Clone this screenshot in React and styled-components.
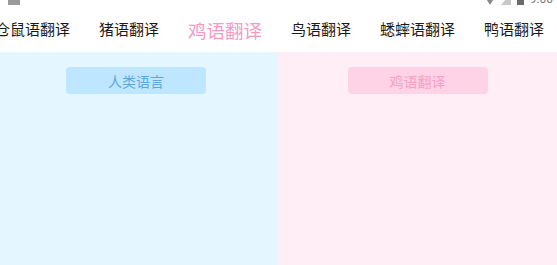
import styled, { createGlobalStyle } from "styled-components";

const GlobalStyle = createGlobalStyle`
  html, body {
    margin: 0;
    padding: 0;
    background: #ffffff;
    font-family: "Noto Sans CJK SC", "Noto Sans", sans-serif;
  }
  #root {
    width: 557px;
    height: 265px;
    overflow: hidden;
  }
`;

const Page = styled.div`
  width: 557px;
  height: 265px;
  display: flex;
  flex-direction: column;
  overflow: hidden;
`;

const StatusBar = styled.div`
  height: 5px;
  padding: 0 4px 0 8px;
  display: flex;
  align-items: flex-end;
  justify-content: space-between;
  overflow: hidden;
  color: #8a8a8a;
`;

const StatusRight = styled.div`
  display: flex;
  align-items: flex-end;
  gap: 6px;
`;

const Clock = styled.span`
  font-family: "Roboto", sans-serif;
  font-size: 12px;
  line-height: 12px;
  color: #7a7a7a;
`;

const TabBar = styled.div`
  height: 47px;
  display: flex;
  align-items: center;
  gap: 29px;
  margin-left: -5px;
  white-space: nowrap;
`;

const Tab = styled.div`
  font-size: ${(p) => (p.$active ? "18.5px" : "15px")};
  color: ${(p) => (p.$active ? "#f49ac6" : "#1a1a1a")};
  line-height: 1;
  padding-top: ${(p) => (p.$active ? "4px" : "0")};
  flex-shrink: 0;
`;

const Panels = styled.div`
  flex: 1;
  display: grid;
  grid-template-columns: 278px 1fr;
`;

const Panel = styled.div`
  background: ${(p) => p.$bg};
  display: flex;
  justify-content: center;
  align-items: flex-start;
  padding-top: 15px;
`;

const LangButton = styled.div`
  width: 140px;
  height: 27px;
  border-radius: 4px;
  background: ${(p) => p.$bg};
  color: ${(p) => p.$fg};
  font-size: 14px;
  display: flex;
  align-items: center;
  justify-content: center;
  margin-left: ${(p) => p.$shift || 0}px;
`;

const tabs = ["仓鼠语翻译", "猪语翻译", "鸡语翻译", "鸟语翻译", "蟋蟀语翻译", "鸭语翻译"];

export default function App() {
  return (
    <>
      <GlobalStyle />
      <Page>
        <StatusBar>
          <svg width="12" height="12" viewBox="0 0 12 12">
            <rect x="0" y="2" width="12" height="10" fill="#9a9a9a" />
          </svg>
          <StatusRight>
            <svg width="10" height="12" viewBox="0 0 10 12">
              <path d="M0 4 L10 4 L5 12 Z" fill="#8a8a8a" />
            </svg>
            <svg width="10" height="12" viewBox="0 0 10 12">
              <path d="M10 0 L10 12 L0 12 Z" fill="#c8c8c8" />
            </svg>
            <svg width="7" height="12" viewBox="0 0 7 12">
              <rect x="0" y="0" width="7" height="12" fill="#6a6a6a" />
            </svg>
            <Clock>9:00</Clock>
          </StatusRight>
        </StatusBar>
        <TabBar>
          {tabs.map((t) => (
            <Tab key={t} $active={t === "鸡语翻译"}>
              {t}
            </Tab>
          ))}
        </TabBar>
        <Panels>
          <Panel $bg="#e4f6ff">
            <LangButton $bg="#bfe6ff" $fg="#5aa9df" $shift={-6}>
              人类语言
            </LangButton>
          </Panel>
          <Panel $bg="#ffeef5">
            <LangButton $bg="#ffd3e6" $fg="#f3a1c6">
              鸡语翻译
            </LangButton>
          </Panel>
        </Panels>
      </Page>
    </>
  );
}
